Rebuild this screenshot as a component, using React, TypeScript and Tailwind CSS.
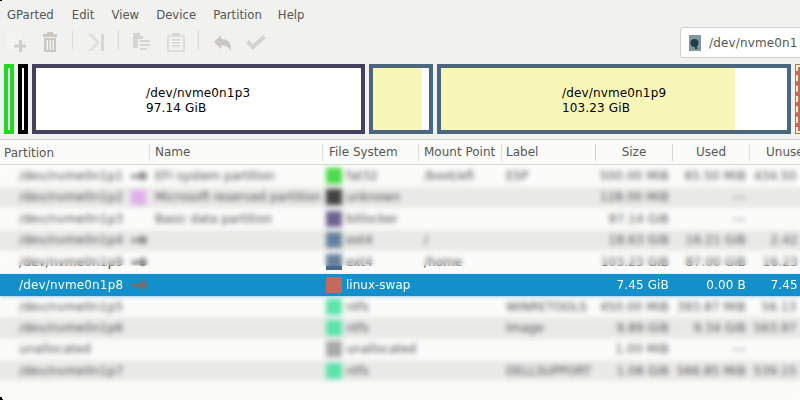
import React from "react";

const font = { fontFamily: '"DejaVu Sans", sans-serif' };

const Key = ({ color = "#6f6f70" }: { color?: string }) => (
  <svg width="16" height="10" viewBox="0 0 16 10" fill={color}>
    <circle cx="11.800" cy="5" r="4.200" />
    <rect x="0" y="3.500" width="9" height="3" />
    <rect x="1" y="6" width="2" height="1.500" />
    <rect x="4" y="6" width="2" height="1.500" />
  </svg>
);

type Row = {
  p: string; key?: boolean; flag?: boolean; name?: string; color: string; fs: string;
  mount?: string; label?: string; size: string; used: string; unused?: string; selected?: boolean;
};

const rows: Row[] = [
  { p: "/dev/nvme0n1p1", key: true, name: "EFI system partition", color: "#2bd62b", fs: "fat32", mount: "/boot/efi", label: "ESP", size: "500.00 MiB", used: "65.50 MiB", unused: "434.50 MiB" },
  { p: "/dev/nvme0n1p2", flag: true, name: "Microsoft reserved partition", color: "#222222", fs: "unknown", size: "128.00 MiB", used: "---" },
  { p: "/dev/nvme0n1p3", name: "Basic data partition", color: "#54477d", fs: "bitlocker", size: "97.14 GiB", used: "---" },
  { p: "/dev/nvme0n1p4", key: true, color: "#4a6a8c", fs: "ext4", mount: "/", size: "18.63 GiB", used: "16.21 GiB", unused: "2.42 GiB" },
  { p: "/dev/nvme0n1p9", key: true, color: "#4a6a8c", fs: "ext4", mount: "/home", size: "103.23 GiB", used: "87.00 GiB", unused: "16.23 GiB" },
  { p: "/dev/nvme0n1p8", key: true, color: "#c4695c", fs: "linux-swap", size: "7.45 GiB", used: "0.00 B", unused: "7.45 GiB", selected: true },
  { p: "/dev/nvme0n1p5", color: "#3ee0a0", fs: "ntfs", label: "WINRETOOLS", size: "450.00 MiB", used: "393.87 MiB", unused: "56.13 MiB" },
  { p: "/dev/nvme0n1p6", color: "#3ee0a0", fs: "ntfs", label: "Image", size: "9.89 GiB", used: "9.34 GiB", unused: "563.97 MiB" },
  { p: "unallocated", color: "#999999", fs: "unallocated", size: "1.00 MiB", used: "---" },
  { p: "/dev/nvme0n1p7", color: "#3ee0a0", fs: "ntfs", label: "DELLSUPPORT", size: "1.08 GiB", used: "566.85 MiB", unused: "539.15 MiB" },
];

const Toolbar = () => (
  <div className="h-[34px] flex items-start pl-[7px] shrink-0">
    <svg width="20" height="20" viewBox="0 0 20 20" className="mt-[3px] mr-[16px]">
      <rect x="0" y="0" width="14" height="17" fill="#f4f4f3" />
      <path d="M12 8h3v4.500h4v3h-4V20h-3v-4.500H7v-3h5z" fill="#cfcecb" />
    </svg>
    <svg width="14" height="20" viewBox="0 0 14 20" fill="#cbc8c4" className="mt-[3px] mr-[15px]">
      <rect x="4" y="0" width="6" height="2" />
      <rect x="0" y="2" width="14" height="3" />
      <path d="M1 6h12v14H1zM3.500 8v10h1.500V8zm3 0v10H8V8zm3 0v10H11V8z" fillRule="evenodd" />
    </svg>
    <div className="w-px h-[18px] bg-[#d9d9d7] mt-[2px] mr-[15px]" />
    <svg width="16" height="17" viewBox="0 0 16 17" className="mt-[5px] mr-[14px]" fill="#e0dfdd">
      <path d="M0 0h4l8 8.500-8 8.500H0l8-8.500z" />
      <rect x="13" y="0" width="3" height="17" fill="#d8d7d5" />
    </svg>
    <div className="w-px h-[18px] bg-[#d9d9d7] mt-[2px] mr-[14px]" />
    <svg width="17" height="17" viewBox="0 0 17 17" fill="#d6d5d2" className="mt-[4px] mr-[17px]">
      <path d="M0 0h7v3h3v3H5v9H0z" />
      <path d="M7 7h10v2H7zM7 11h10v2H7zM7 15h7v2H7z" />
    </svg>
    <svg width="18" height="19" viewBox="0 0 18 19" className="mt-[4px] mr-[13px]">
      <path d="M0 2h18v17H0zM2 4v13h14V4z" fillRule="evenodd" fill="#dededc" />
      <rect x="5" y="0" width="8" height="3" fill="#d8d7d5" />
      <path d="M5 6h8v1.500H5zM5 9h8v1.500H5zM5 12h8v1.500H5z" fill="#d4d3d0" />
    </svg>
    <div className="w-px h-[18px] bg-[#d9d9d7] mt-[2px] mr-[15px]" />
    <svg width="17" height="16" viewBox="0 0 17 16" fill="#cbc8c4" className="mt-[6px] mr-[15px]">
      <path d="M7 0v4c6 0 10 3 10 8 0 1-.2 2.500-.8 4-.8-3.500-3.500-5.500-9.200-5.500V14L0 7z" />
    </svg>
    <svg width="20" height="15" viewBox="0 0 20 15" fill="#d4d3d0" className="mt-[6px]">
      <path d="M0 8l3-3 4 4 10-9 3 3L7 15z" />
    </svg>
  </div>
);

const Seg = ({ border, className, fill, children }: { border: string; className: string; fill?: string; children?: React.ReactNode }) => (
  <div className={`relative h-[70px] border-[4px] bg-white shrink-0 overflow-hidden ${border} ${className}`}>
    {fill && <div className={`absolute inset-y-0 left-0 bg-[#f9f7b8] ${fill}`} />}
    {children}
  </div>
);

const cols = "grid grid-cols-[149px_173px_96px_83px_94px_77px_77px_74px]";
const hc = "border-l border-[#d8d8d6] h-[17px] leading-[17px]";
const num = "tracking-[0.15px]";

export default function App() {
  return (
    <div className="relative w-[800px] h-[400px] overflow-hidden bg-[#f1f1f0] text-[12px] text-[#555753] flex flex-col" style={font}>
      <div className="h-[29px] flex items-center pt-[2px] pl-[7px] gap-[17px] shrink-0 text-[11.7px] text-[#555753]">
        <span>GParted</span><span className="ml-[1px]">Edit</span><span>View</span><span>Device</span><span>Partition</span><span className="-ml-[1px]">Help</span>
      </div>
      <div className="relative">
        <Toolbar />
        <div className="absolute left-[680px] -top-[2px] w-[140px] h-[31px] bg-white border border-[#cfcfcc] rounded-[3px] flex items-center pl-[8px] gap-[8px]">
          <svg width="12" height="16" viewBox="0 0 12 16">
            <rect width="12" height="16" fill="#82989c" />
            <circle cx="5.500" cy="8" r="4" fill="#1f3f50" />
            <path d="M6 9l3 5H6z" fill="#1f3f50" />
          </svg>
          <span className={`text-[#555753] ${num}`}>/dev/nvme0n1</span>
        </div>
      </div>

      <div className="flex pl-[4px] gap-[4px] h-[70px] mt-[1px] shrink-0">
        <Seg border="border-[#1ddc1d]" className="w-[10px]" />
        <Seg border="border-black" className="w-[10px]" />
        <Seg border="border-[#46405f]" className="w-[333px]">
          <div className={`absolute left-[110px] top-[17.500px] leading-[15px] text-black ${num}`}>/dev/nvme0n1p3<br />97.14 GiB</div>
        </Seg>
        <Seg border="border-[#4a677f]" className="w-[64px]" fill="w-[49px]" />
        <Seg border="border-[#4a677f]" className="w-[354px]" fill="w-[294px]">
          <div className={`absolute left-[121px] top-[17.500px] leading-[15px] text-black ${num}`}>/dev/nvme0n1p9<br />103.23 GiB</div>
        </Seg>
        <div className="relative h-[70px] w-[20px] shrink-0 bg-[#c4695c]">
          <div className="absolute inset-[1px] border-2 border-dashed border-[#f9f7b8]" />
        </div>
      </div>

      <div className="mt-[5px] h-px bg-[#cfcfcd] shrink-0" />

      <div className="relative flex-1 bg-[#fbfbfa]">
        <div className={`${cols} h-[25px] pt-[1px] items-center bg-[#fbfbfa] border-b border-[#d8d8d6] text-[#555753]`}>
          <div className="pl-[4px]">Partition</div>
          <div className={`pl-[5px] ${hc}`}>Name</div>
          <div className={`pl-[6px] ${hc}`}>File System</div>
          <div className={`pl-[5px] ${hc}`}>Mount Point</div>
          <div className={`pl-[4px] ${hc}`}>Label</div>
          <div className={`text-center ${hc}`}>Size</div>
          <div className={`text-center ${hc}`}>Used</div>
          <div className={`pl-[16px] ${hc}`}>Unused</div>
        </div>
        {rows.map((r, i) => (
          <div
            key={r.p}
            className={`${cols} items-center whitespace-nowrap ${r.selected ? "relative z-10 h-[22px] mt-[1.500px] bg-[#1290cc] text-white shadow-[0_1px_3px_rgba(18,144,204,0.4)]" : i < 5 ? "h-[21.500px]" : "h-[21.300px]"} ${r.selected ? "" : i % 2 ? "bg-[#e6e6e4] text-[#333]" : "bg-[#fbfbfa] text-[#333]"}`}
          >
            <div className="flex items-center pl-[19px] gap-[8px] relative">
              <span className={num}>{r.p}</span>
              {r.key && <Key />}
              {r.flag && <span className="absolute left-[131px] w-[15px] h-[15px] bg-[#dca0e8]" />}
            </div>
            <div className="pl-[6px]">{r.name}</div>
            <div className="flex items-center gap-[4px] pl-[4px]">
              <span className="w-[16px] h-[16px] shrink-0" style={{ backgroundColor: r.color }} />
              <span>{r.fs}</span>
            </div>
            <div className="pl-[6px]">{r.mount}</div>
            <div className="pl-[5px]">{r.label}</div>
            <div className={`text-right pr-[3px] ${num}`}>{r.size}</div>
            <div className={`text-right pr-[3px] ${num}`}>{r.used}</div>
            <div className={`text-right ${num}`}>{r.unused}</div>
          </div>
        ))}
        <div className="absolute left-0 right-0 top-[25px] h-[101px] backdrop-blur-[2.500px] bg-white/15" />
        <div className="absolute left-0 right-0 top-[156px] bottom-0 backdrop-blur-[2.500px] bg-white/15" />
      </div>
      <span className="absolute left-0 top-0 w-[2px] h-px bg-black" />
      <span className="absolute left-0 bottom-0 w-[3px] h-[3px] border-l-2 border-b border-black" />
    </div>
  );
}
